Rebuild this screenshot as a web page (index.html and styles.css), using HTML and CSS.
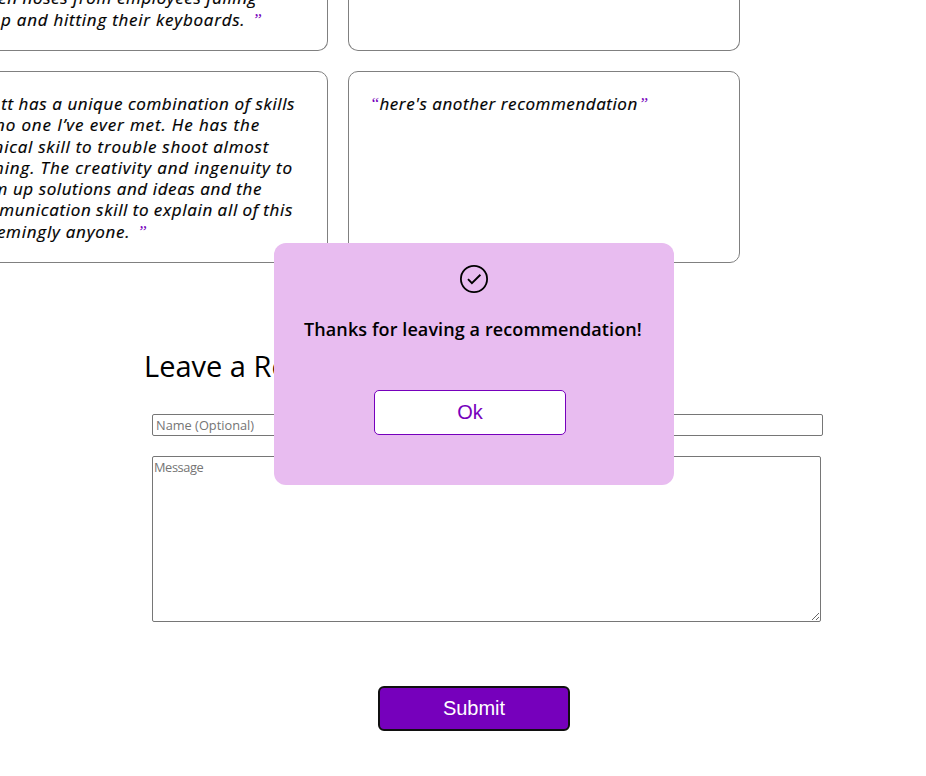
FILE: index.html
```html
<!DOCTYPE html>
<html lang="en">
<head>
<meta charset="utf-8">
<title>Recommendations</title>
<link rel="stylesheet" href="styles.css">
</head>
<body>
<main class="page">
  <section class="cards">
    <article class="card card-top">
      <p class="line end-256">en noses from employees falling</p>
      <p class="line end-261 loose">p and hitting their keyboards. <span class="quote quote-gap">”</span></p>
    </article>
    <article class="card card-top"></article>
    <article class="card">
      <p class="line end-294">tt has a unique combination of skills</p>
      <p class="line end-259 looser">no one I’ve ever met. He has the</p>
      <p class="line end-268 loose">nical skill to trouble shoot almost</p>
      <p class="line end-292 looser">hing. The creativity and ingenuity to</p>
      <p class="line end-261">m up solutions and ideas and the</p>
      <p class="line end-292 wide-words">munication skill to explain all of this</p>
      <p class="line end-147 loose">emingly anyone. <span class="quote quote-gap">”</span></p>
    </article>
    <article class="card">
      <p class="line short"><span class="quote">“</span>here's another recommendation<span class="quote quote-end">”</span></p>
    </article>
  </section>
  <section class="form">
    <h2 class="heading">Leave a Recommendation</h2>
    <input class="name" type="text" placeholder="Name (Optional)">
    <textarea class="message" placeholder="Message"></textarea>
    <button class="submit">Submit</button>
  </section>
</main>
<div class="popup">
  <svg class="check" viewBox="0 0 28 28" fill="none" stroke="#000"><circle cx="14" cy="14" r="13.1" stroke-width="1.8"/><path d="M8 14.2 11.9 18.1 20.4 9.8" stroke-width="1.9"/></svg>
  <h3 class="thanks">Thanks for leaving a recommendation!</h3>
  <button class="ok">Ok</button>
</div>
</body>
</html>
```
FILE: styles.css
```css
body {
  margin: 0;
  height: 776px;
  overflow: hidden;
  background: #fff;
  color: #000;
  font-family: "Trebuchet MS", "Open Sans", sans-serif;
}
.page { width: 948px; }
.cards {
  display: grid;
  grid-template-columns: 392px 392px;
  grid-template-rows: 51px 192px;
  gap: 20px;
  margin-left: -64px;
}
.card {
  box-sizing: border-box;
  border: 1px solid #808080;
  border-radius: 10px;
  padding: 21px 0 0;
  overflow: hidden;
}
.card-top {
  display: flex;
  flex-direction: column;
  justify-content: flex-end;
  border-top: 0;
  border-radius: 0 0 10px 10px;
  padding: 0 0 20px;
}
.line {
  margin: 0;
  display: flex;
  justify-content: flex-end;
  white-space: pre;
  font-size: 17px;
  font-style: italic;
  letter-spacing: 0.6px;
  line-height: 21.3px;
  -webkit-text-stroke: 0.2px #000;
}
.loose { letter-spacing: 0.76px; }
.looser { letter-spacing: 0.87px; }
.wide-words { letter-spacing: 0.7px; word-spacing: -0.6px; }
.quote {
  color: #7600bc;
  font-family: "Liberation Serif", serif;
  letter-spacing: 0;
  -webkit-text-stroke: 0;
}
.quote-end { margin-left: 1px; }
.quote-gap { margin-left: 2px; }
.end-294 { margin-right: 32px; }
.end-292 { margin-right: 34px; }
.end-268 { margin-right: 58px; }
.end-261 { margin-right: 65px; }
.end-259 { margin-right: 67px; }
.end-256 { margin-right: 70px; }
.end-147 { margin-right: 180px; }
.short { justify-content: flex-start; margin-left: 21px; letter-spacing: 0.57px; }
.form { padding: 83px 0 0 144px; }
.heading {
  margin: 0;
  height: 40px;
  line-height: 40px;
  font-size: 29px;
  font-weight: 400;
}
.name, .message {
  display: block;
  box-sizing: border-box;
  margin: 0 0 0 8px;
  border: 1px solid #767676;
  border-radius: 2px;
  background: #fff;
  font-family: inherit;
  font-size: 12.8px;
  line-height: 17px;
}
.name { width: 671px; height: 22px; margin-top: 28px; padding: 1px 3px; }
.message { width: 669px; height: 166px; margin-top: 20px; padding: 2px 1px; letter-spacing: -0.4px; }
.name::placeholder, .message::placeholder { color: #757575; }
.submit, .ok {
  display: block;
  box-sizing: border-box;
  width: 192px;
  height: 45px;
  padding: 0;
  border-radius: 6px;
  font: 20px "Liberation Sans", Arial, sans-serif;
}
.submit { margin: 64px 0 0 234px; border: 2px solid #101010; background: #7600bc; color: #fff; }
.popup {
  position: absolute;
  left: 274px;
  top: 243px;
  box-sizing: border-box;
  width: 400px;
  height: 242px;
  padding-top: 22px;
  border-radius: 12px;
  background: #e8bcf0;
}
.check { display: block; width: 28px; height: 28px; margin: 0 auto; }
.thanks {
  margin: 23px 0 0 30px;
  height: 26px;
  line-height: 26px;
  font-size: 18px;
  font-weight: 600;
  letter-spacing: 0.1px;
  white-space: nowrap;
}
.ok { margin: 48px 0 0 100px; border: 1px solid #7600bc; background: #fff; color: #7600bc; border-radius: 5px; }
```
